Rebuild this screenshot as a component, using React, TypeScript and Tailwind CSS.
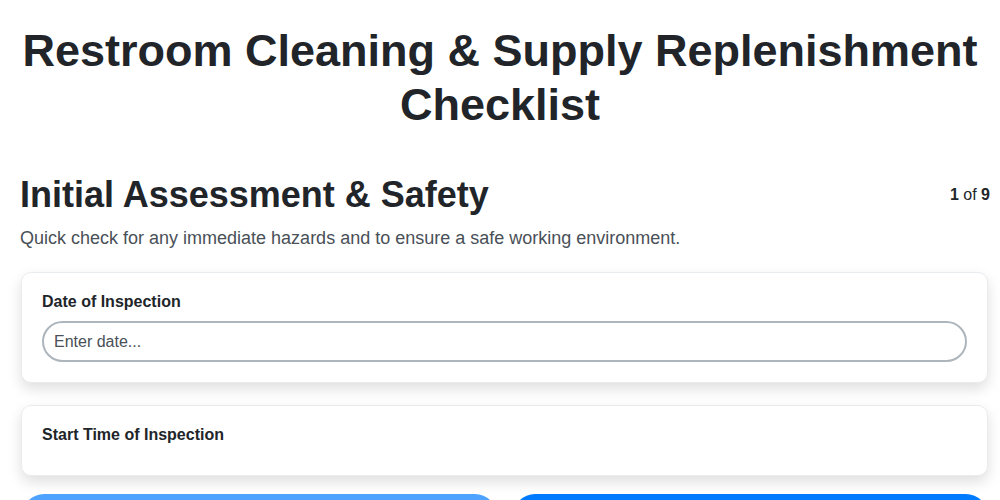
export default function App() {
  return (
    <div className="min-h-screen bg-white text-[#212529] font-['Liberation_Sans',Arial,sans-serif]">
      {/* Title */}
      <h1 className="pt-6 px-5 text-center text-[45px] font-bold leading-[54px]">
        Restroom Cleaning &amp; Supply Replenishment Checklist
      </h1>

      <div className="pl-5 pr-2.5 mt-[41px]">
        {/* Section header */}
        <div className="flex items-center justify-between">
          <h2 className="text-[36px] font-bold leading-[1.2]">
            Initial Assessment &amp; Safety
          </h2>
          <div className="text-base">
            <span className="font-bold">1</span> of <span className="font-bold">9</span>
          </div>
        </div>
        <p className="mt-[9px] text-lg leading-[27px] text-[#495057]">
          Quick check for any immediate hazards and to ensure a safe working environment.
        </p>

        {/* Questions */}
        <div className="mt-5 flex flex-col gap-[22px] pl-px pr-0.5">
          <div className="rounded-[10px] border border-[#e9ecef] bg-white px-5 pt-[17px] pb-5 shadow-[0_6px_14px_rgba(0,0,0,0.13)]">
            <label className="block text-base font-bold leading-6">Date of Inspection</label>
            <input
              type="text"
              placeholder="Enter date..."
              className="mt-[7px] block h-[41px] w-full rounded-full border-2 border-[#adb5bd] px-2.5 text-base text-[#212529] outline-none placeholder:text-[#495057]"
            />
          </div>

          <div className="rounded-[10px] border border-[#e9ecef] bg-white px-5 pt-[17px] pb-7 shadow-[0_6px_14px_rgba(0,0,0,0.13)]">
            <label className="block text-base font-bold leading-6">Start Time of Inspection</label>
          </div>
        </div>

        {/* Navigation */}
        <div className="mt-[18px] flex gap-4 pl-0.5 pr-0.5 pb-5">
          <button className="h-11 flex-1 rounded-full bg-[#4da3ff] text-base font-bold text-white">
            Previous
          </button>
          <button className="h-11 flex-1 rounded-full bg-[#007bff] text-base font-bold text-white">
            Next
          </button>
        </div>
      </div>
    </div>
  );
}
